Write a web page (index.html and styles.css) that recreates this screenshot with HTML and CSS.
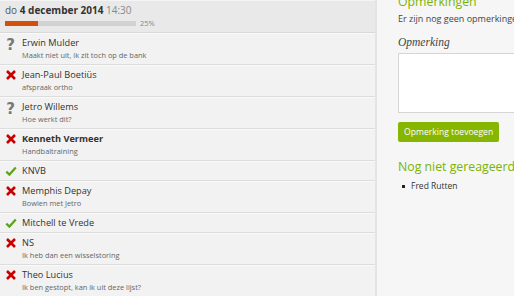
FILE: index.html
```html
<!DOCTYPE html>
<html>
<head>
<meta charset="utf-8">
<link rel="stylesheet" href="styles.css">
</head>
<body>
<div class="page">
  <section class="list">
    <header class="day">
      <div class="date"><span class="dow">do</span> <b>4 december 2014</b> <span class="time">14:30</span></div>
      <div class="progress">
        <div class="track"><div class="fill" style="width:25%"></div></div>
        <span class="pct">25%</span>
      </div>
    </header>
    <ul class="people">
      <li class="person">
        <span class="icon q">?</span>
        <div class="info"><div class="name">Erwin Mulder</div><div class="note">Maakt niet uit, ik zit toch op de bank</div></div>
      </li>
      <li class="person">
        <span class="icon"><svg viewBox="0 0 12 12" width="12" height="12"><path class="no" d="M2 2L10 10M10 2L2 10"/></svg></span>
        <div class="info"><div class="name">Jean-Paul Boetiüs</div><div class="note">afspraak ortho</div></div>
      </li>
      <li class="person">
        <span class="icon q">?</span>
        <div class="info"><div class="name">Jetro Willems</div><div class="note">Hoe werkt dit?</div></div>
      </li>
      <li class="person">
        <span class="icon"><svg viewBox="0 0 12 12" width="12" height="12"><path class="no" d="M2 2L10 10M10 2L2 10"/></svg></span>
        <div class="info"><div class="name bold">Kenneth Vermeer</div><div class="note">Handbaltraining</div></div>
      </li>
      <li class="person">
        <span class="icon"><svg viewBox="0 0 12 12" width="12" height="12"><path class="yes" d="M1.3 6.6L4.4 9.6L10.8 2.6"/></svg></span>
        <div class="info"><div class="name">KNVB</div></div>
      </li>
      <li class="person">
        <span class="icon"><svg viewBox="0 0 12 12" width="12" height="12"><path class="no" d="M2 2L10 10M10 2L2 10"/></svg></span>
        <div class="info"><div class="name">Memphis Depay</div><div class="note">Bowlen met Jetro</div></div>
      </li>
      <li class="person">
        <span class="icon"><svg viewBox="0 0 12 12" width="12" height="12"><path class="yes" d="M1.3 6.6L4.4 9.6L10.8 2.6"/></svg></span>
        <div class="info"><div class="name">Mitchell te Vrede</div></div>
      </li>
      <li class="person">
        <span class="icon"><svg viewBox="0 0 12 12" width="12" height="12"><path class="no" d="M2 2L10 10M10 2L2 10"/></svg></span>
        <div class="info"><div class="name">NS</div><div class="note">Ik heb dan een wisselstoring</div></div>
      </li>
      <li class="person">
        <span class="icon"><svg viewBox="0 0 12 12" width="12" height="12"><path class="no" d="M2 2L10 10M10 2L2 10"/></svg></span>
        <div class="info"><div class="name">Theo Lucius</div><div class="note">Ik ben gestopt, kan ik uit deze lijst?</div></div>
      </li>
    </ul>
  </section>
  <aside class="side">
    <h2 class="heading first">Opmerkingen</h2>
    <p class="empty">Er zijn nog geen opmerkingen.</p>
    <label class="label">Opmerking</label>
    <div class="textarea"></div>
    <button class="btn">Opmerking toevoegen</button>
    <h2 class="heading">Nog niet gereageerd</h2>
    <ul class="pending">
      <li>Fred Rutten</li>
    </ul>
  </aside>
</div>
</body>
</html>
```

FILE: styles.css
```css
html, body {
  margin: 0;
  padding: 0;
  height: 100%;
  overflow: hidden;
}
body {
  background: #f6f6f6;
  font-family: "Open Sans", "DejaVu Sans", sans-serif;
  color: #333;
}
.page {
  display: flex;
  align-items: stretch;
  min-height: 100vh;
}
.list {
  width: 375px;
  flex: none;
  background: #f2f2f2;
  border-right: 2px solid #e4e4e4;
}
.day {
  background: #e9e9e9;
  border-top: 1px solid #f4f4f4;
  border-bottom: 1px solid #d9d9d9;
  padding-left: 5px;
  box-sizing: border-box;
  height: 33px;
}
.date {
  font-size: 10px;
  line-height: 18px;
  color: #555;
}
.date b {
  color: #333;
  font-weight: 700;
}
.date .time {
  color: #888;
}
.progress {
  display: flex;
  align-items: center;
  gap: 4px;
}
.track {
  width: 131px;
  height: 5px;
  background: #d2d2d2;
}
.fill {
  height: 100%;
  background: #d1500c;
}
.pct {
  font-size: 7.5px;
  color: #888;
  line-height: 8px;
}
.people {
  list-style: none;
  margin: 0;
  padding: 0;
}
.person {
  display: flex;
  border-top: 1px solid #fafafa;
  border-bottom: 1px solid #dcdcdc;
  padding: 3px 0 3px 0;
}
.icon {
  width: 22px;
  flex: none;
  display: flex;
  justify-content: center;
  padding-right: 1px;
  box-sizing: border-box;
  height: 12px;
  align-items: center;
}
.icon svg {
  display: block;
}
.icon.q {
  font-family: "DejaVu Sans", sans-serif;
  font-weight: 700;
  font-size: 15px;
  color: #777;
  line-height: 12px;
  padding-top: 4px;
}
.no {
  stroke: #c80000;
  stroke-width: 2.6;
  fill: none;
}
.yes {
  stroke: #5da41c;
  stroke-width: 2.2;
  fill: none;
}
.name {
  font-size: 9.2px;
  line-height: 12px;
  color: #333;
}
.name.bold {
  font-weight: 700;
}
.note {
  font-size: 7.4px;
  line-height: 12px;
  color: #666;
}
.side {
  padding-left: 21px;
  flex: none;
  width: 200px;
}
.heading {
  margin: 0;
  font-weight: 400;
  font-size: 12.3px;
  line-height: 16px;
  color: #7bb300;
}
.heading.first {
  margin-top: -6px;
}
.empty {
  margin: 3px 0 0;
  font-size: 9px;
  line-height: 12px;
  color: #444;
  white-space: nowrap;
}
.label {
  display: block;
  margin-top: 11px;
  font-family: "Liberation Serif", serif;
  font-style: italic;
  font-size: 11.5px;
  line-height: 12px;
  color: #444;
}
.textarea {
  margin-top: 5px;
  width: 140px;
  height: 58px;
  background: #fff;
  border: 1px solid #d6d6d6;
}
.btn {
  display: block;
  margin-top: 9px;
  height: 20px;
  padding: 0 6px;
  border: 0;
  border-radius: 2px;
  background: #86b600;
  color: #fff;
  font-family: "Open Sans", sans-serif;
  font-size: 8.6px;
  line-height: 20px;
  cursor: pointer;
}
.btn + .heading {
  margin-top: 17px;
}
.pending {
  margin: 5px 0 0;
  padding: 0 0 0 4px;
  list-style: none;
  font-size: 8.5px;
  line-height: 12px;
  color: #333;
}
.pending li {
  display: flex;
  align-items: center;
  gap: 6px;
}
.pending li::before {
  content: "";
  width: 3px;
  height: 3px;
  background: #222;
}
```
